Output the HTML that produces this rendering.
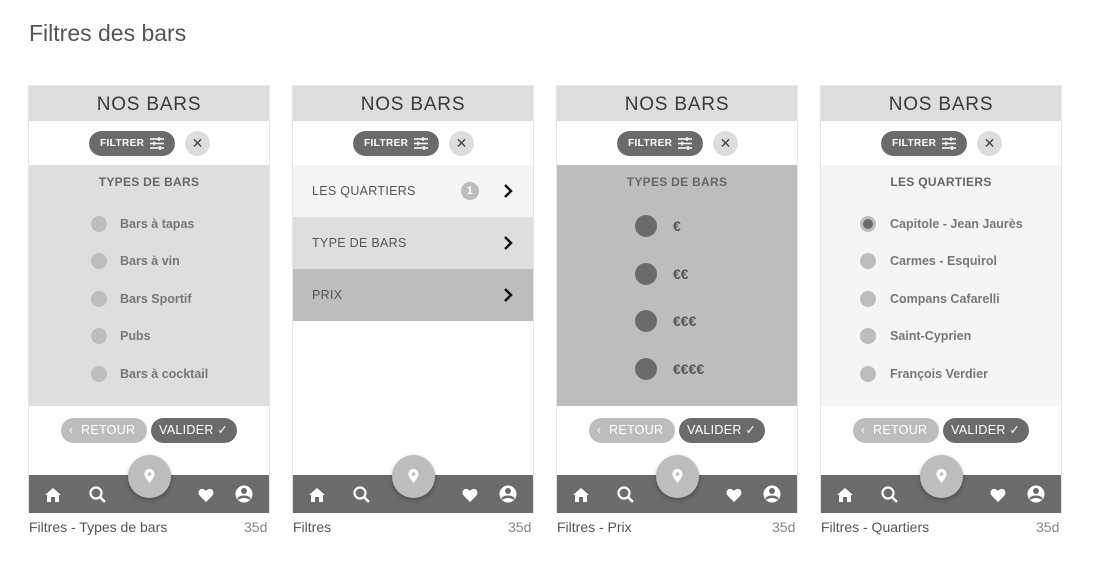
<!DOCTYPE html>
<html><head><meta charset="utf-8"><style>
*{margin:0;padding:0;box-sizing:border-box}
body{width:1106px;height:570px;background:#fff;font-family:"Liberation Sans",sans-serif;position:relative;overflow:hidden}
h1{position:absolute;left:29px;top:20px;font-weight:normal;font-size:23px;color:#555}
.p{position:absolute;top:85px;width:242px;height:428px;border:1px solid #e6e6e6;border-bottom:none;background:#fff}
.hd{position:absolute;left:0;top:0;width:240px;height:35px;background:#ddd;text-align:center;font-size:19px;color:#3a3a3a;line-height:37px;letter-spacing:.8px}
.fl{position:absolute;left:60px;top:45px;width:86px;height:25px;border-radius:13px;background:#6b6b6b;color:#fff;font-size:10px;font-weight:bold;line-height:25px;padding-left:11px;letter-spacing:.4px}
.fl svg{position:absolute;right:11px;top:6px}
.x{position:absolute;left:156px;top:45px;width:25px;height:25px;border-radius:50%;background:#ddd;color:#444;text-align:center;line-height:25px;font-size:14px}
.ct{position:absolute;left:0;top:79px;width:240px;height:241px}
.tt{position:absolute;left:0;width:240px;text-align:center;top:10px;font-size:12px;font-weight:bold;color:#666;letter-spacing:.3px}
.r{position:absolute;width:16px;height:16px;border-radius:50%;background:#bdbdbd}
.lb{position:absolute;font-size:12.5px;font-weight:bold;color:#777}
.btn{position:absolute;top:332px;height:25px;border-radius:13px;font-size:12.5px;color:#fff;line-height:25px;letter-spacing:.3px}
.nav{position:absolute;left:0;top:389px;width:240px;height:38px;background:#6b6b6b}
.map{position:absolute;left:99px;top:369px;width:43px;height:43px;border-radius:50%;background:#bdbdbd;box-shadow:0 2px 4px rgba(0,0,0,.3)}
.cap{position:absolute;top:519px;font-size:14px;color:#555}
.d{position:absolute;top:519px;font-size:14px;color:#888}
.row{position:absolute;left:0;width:240px;height:52px;font-size:12.5px;color:#555;line-height:52px;padding-left:19px;letter-spacing:.3px}
.row svg{position:absolute;right:20px;top:18px}
</style></head><body>
<h1>Filtres des bars</h1>

<div class="p" style="left:28px">
 <div class="hd">NOS BARS</div>
 <div class="fl">FILTRER<svg width="14" height="13" viewBox="0 0 14 13" stroke="#fff" stroke-width="1.4" fill="none"><path d="M0 2h14M0 6.5h14M0 11h14M9 0v4M4 4.5v4M10 9v4"/></svg></div>
 <div class="x">✕</div>
 <div class="ct" style="background:#dedede">
  <div class="tt">TYPES DE BARS</div>
  <div class="r" style="left:62px;top:51px"></div><div class="lb" style="left:91px;top:52px">Bars à tapas</div>
  <div class="r" style="left:62px;top:88px"></div><div class="lb" style="left:91px;top:89px">Bars à vin</div>
  <div class="r" style="left:62px;top:126px"></div><div class="lb" style="left:91px;top:127px">Bars Sportif</div>
  <div class="r" style="left:62px;top:163px"></div><div class="lb" style="left:91px;top:164px">Pubs</div>
  <div class="r" style="left:62px;top:201px"></div><div class="lb" style="left:91px;top:202px">Bars à cocktail</div>
 </div>
 <div class="btn" style="left:32px;width:86px;background:#bdbdbd;padding-left:8px">‹&nbsp;&nbsp;RETOUR</div>
 <div class="btn" style="left:122px;width:86px;background:#6b6b6b;padding-left:8px">VALIDER ✓</div>
 <div class="nav"><svg width="240" height="38" fill="#fff"><path d="M16 20l8-7 8 7h-2v7h-4v-5h-4v5h-4v-7z"/><circle cx="67" cy="18" r="5.5" fill="none" stroke="#fff" stroke-width="2.2"/><path d="M71 22l5 5" stroke="#fff" stroke-width="2.6"/><path d="M177 27l-6-6c-3-3-1-8 3-7 1.5.3 2.5 1.3 3 2 .5-.7 1.5-1.7 3-2 4-1 6 4 3 7z"/><circle cx="215" cy="19" r="8.5"/><circle cx="215" cy="16" r="3" fill="#6b6b6b"/><path d="M209 24c3-3 9-3 12 0" stroke="#6b6b6b" stroke-width="2.5" fill="none"/></svg></div>
 <div class="map"><svg width="43" height="43"><path d="M21.5 14c-3 0-5 2.2-5 5 0 3.5 5 9 5 9s5-5.5 5-9c0-2.8-2-5-5-5z" fill="#fff"/><circle cx="21.5" cy="19" r="1.8" fill="#bdbdbd"/></svg></div>
</div>

<div class="p" style="left:292px">
 <div class="hd">NOS BARS</div>
 <div class="fl">FILTRER<svg width="14" height="13" viewBox="0 0 14 13" stroke="#fff" stroke-width="1.4" fill="none"><path d="M0 2h14M0 6.5h14M0 11h14M9 0v4M4 4.5v4M10 9v4"/></svg></div>
 <div class="x">✕</div>
 <div class="row" style="top:79px;background:#f5f5f5">LES QUARTIERS<span style="position:absolute;left:168px;top:17px;width:18px;height:18px;border-radius:50%;background:#bdbdbd;color:#fff;font-size:11px;line-height:18px;text-align:center;font-weight:bold">1</span><svg width="10" height="16"><path d="M2 2l6 6-6 6" stroke="#111" stroke-width="2.5" fill="none"/></svg></div>
 <div class="row" style="top:131px;background:#dedede">TYPE DE BARS<svg width="10" height="16"><path d="M2 2l6 6-6 6" stroke="#111" stroke-width="2.5" fill="none"/></svg></div>
 <div class="row" style="top:183px;background:#bdbdbd">PRIX<svg width="10" height="16"><path d="M2 2l6 6-6 6" stroke="#111" stroke-width="2.5" fill="none"/></svg></div>
 <div class="nav"><svg width="240" height="38" fill="#fff"><path d="M16 20l8-7 8 7h-2v7h-4v-5h-4v5h-4v-7z"/><circle cx="67" cy="18" r="5.5" fill="none" stroke="#fff" stroke-width="2.2"/><path d="M71 22l5 5" stroke="#fff" stroke-width="2.6"/><path d="M177 27l-6-6c-3-3-1-8 3-7 1.5.3 2.5 1.3 3 2 .5-.7 1.5-1.7 3-2 4-1 6 4 3 7z"/><circle cx="215" cy="19" r="8.5"/><circle cx="215" cy="16" r="3" fill="#6b6b6b"/><path d="M209 24c3-3 9-3 12 0" stroke="#6b6b6b" stroke-width="2.5" fill="none"/></svg></div>
 <div class="map"><svg width="43" height="43"><path d="M21.5 14c-3 0-5 2.2-5 5 0 3.5 5 9 5 9s5-5.5 5-9c0-2.8-2-5-5-5z" fill="#fff"/><circle cx="21.5" cy="19" r="1.8" fill="#bdbdbd"/></svg></div>
</div>

<div class="p" style="left:556px">
 <div class="hd">NOS BARS</div>
 <div class="fl">FILTRER<svg width="14" height="13" viewBox="0 0 14 13" stroke="#fff" stroke-width="1.4" fill="none"><path d="M0 2h14M0 6.5h14M0 11h14M9 0v4M4 4.5v4M10 9v4"/></svg></div>
 <div class="x">✕</div>
 <div class="ct" style="background:#bdbdbd">
  <div class="tt">TYPES DE BARS</div>
  <div class="r" style="left:78px;top:50px;width:22px;height:22px;background:#6b6b6b"></div><div class="lb" style="left:116px;top:53px;color:#555;font-size:14px">€</div>
  <div class="r" style="left:78px;top:98px;width:22px;height:22px;background:#6b6b6b"></div><div class="lb" style="left:116px;top:101px;color:#555;font-size:14px">€€</div>
  <div class="r" style="left:78px;top:145px;width:22px;height:22px;background:#6b6b6b"></div><div class="lb" style="left:116px;top:148px;color:#555;font-size:14px">€€€</div>
  <div class="r" style="left:78px;top:193px;width:22px;height:22px;background:#6b6b6b"></div><div class="lb" style="left:116px;top:196px;color:#555;font-size:14px">€€€€</div>
 </div>
 <div class="btn" style="left:32px;width:86px;background:#bdbdbd;padding-left:8px">‹&nbsp;&nbsp;RETOUR</div>
 <div class="btn" style="left:122px;width:86px;background:#6b6b6b;padding-left:8px">VALIDER ✓</div>
 <div class="nav"><svg width="240" height="38" fill="#fff"><path d="M16 20l8-7 8 7h-2v7h-4v-5h-4v5h-4v-7z"/><circle cx="67" cy="18" r="5.5" fill="none" stroke="#fff" stroke-width="2.2"/><path d="M71 22l5 5" stroke="#fff" stroke-width="2.6"/><path d="M177 27l-6-6c-3-3-1-8 3-7 1.5.3 2.5 1.3 3 2 .5-.7 1.5-1.7 3-2 4-1 6 4 3 7z"/><circle cx="215" cy="19" r="8.5"/><circle cx="215" cy="16" r="3" fill="#6b6b6b"/><path d="M209 24c3-3 9-3 12 0" stroke="#6b6b6b" stroke-width="2.5" fill="none"/></svg></div>
 <div class="map"><svg width="43" height="43"><path d="M21.5 14c-3 0-5 2.2-5 5 0 3.5 5 9 5 9s5-5.5 5-9c0-2.8-2-5-5-5z" fill="#fff"/><circle cx="21.5" cy="19" r="1.8" fill="#bdbdbd"/></svg></div>
</div>

<div class="p" style="left:820px">
 <div class="hd">NOS BARS</div>
 <div class="fl">FILTRER<svg width="14" height="13" viewBox="0 0 14 13" stroke="#fff" stroke-width="1.4" fill="none"><path d="M0 2h14M0 6.5h14M0 11h14M9 0v4M4 4.5v4M10 9v4"/></svg></div>
 <div class="x">✕</div>
 <div class="ct" style="background:#f5f5f5">
  <div class="tt">LES QUARTIERS</div>
  <div class="r" style="left:39px;top:51px;background:#6b6b6b;border:3px solid #bdbdbd"></div><div class="lb" style="left:69px;top:52px">Capitole - Jean Jaurès</div>
  <div class="r" style="left:39px;top:88px"></div><div class="lb" style="left:69px;top:89px">Carmes - Esquirol</div>
  <div class="r" style="left:39px;top:126px"></div><div class="lb" style="left:69px;top:127px">Compans Cafarelli</div>
  <div class="r" style="left:39px;top:163px"></div><div class="lb" style="left:69px;top:164px">Saint-Cyprien</div>
  <div class="r" style="left:39px;top:201px"></div><div class="lb" style="left:69px;top:202px">François Verdier</div>
 </div>
 <div class="btn" style="left:32px;width:86px;background:#bdbdbd;padding-left:8px">‹&nbsp;&nbsp;RETOUR</div>
 <div class="btn" style="left:122px;width:86px;background:#6b6b6b;padding-left:8px">VALIDER ✓</div>
 <div class="nav"><svg width="240" height="38" fill="#fff"><path d="M16 20l8-7 8 7h-2v7h-4v-5h-4v5h-4v-7z"/><circle cx="67" cy="18" r="5.5" fill="none" stroke="#fff" stroke-width="2.2"/><path d="M71 22l5 5" stroke="#fff" stroke-width="2.6"/><path d="M177 27l-6-6c-3-3-1-8 3-7 1.5.3 2.5 1.3 3 2 .5-.7 1.5-1.7 3-2 4-1 6 4 3 7z"/><circle cx="215" cy="19" r="8.5"/><circle cx="215" cy="16" r="3" fill="#6b6b6b"/><path d="M209 24c3-3 9-3 12 0" stroke="#6b6b6b" stroke-width="2.5" fill="none"/></svg></div>
 <div class="map"><svg width="43" height="43"><path d="M21.5 14c-3 0-5 2.2-5 5 0 3.5 5 9 5 9s5-5.5 5-9c0-2.8-2-5-5-5z" fill="#fff"/><circle cx="21.5" cy="19" r="1.8" fill="#bdbdbd"/></svg></div>
</div>

<div class="cap" style="left:29px">Filtres - Types de bars</div><div class="d" style="left:244px">35d</div>
<div class="cap" style="left:293px">Filtres</div><div class="d" style="left:508px">35d</div>
<div class="cap" style="left:557px">Filtres - Prix</div><div class="d" style="left:772px">35d</div>
<div class="cap" style="left:821px">Filtres - Quartiers</div><div class="d" style="left:1036px">35d</div>
</body></html>
